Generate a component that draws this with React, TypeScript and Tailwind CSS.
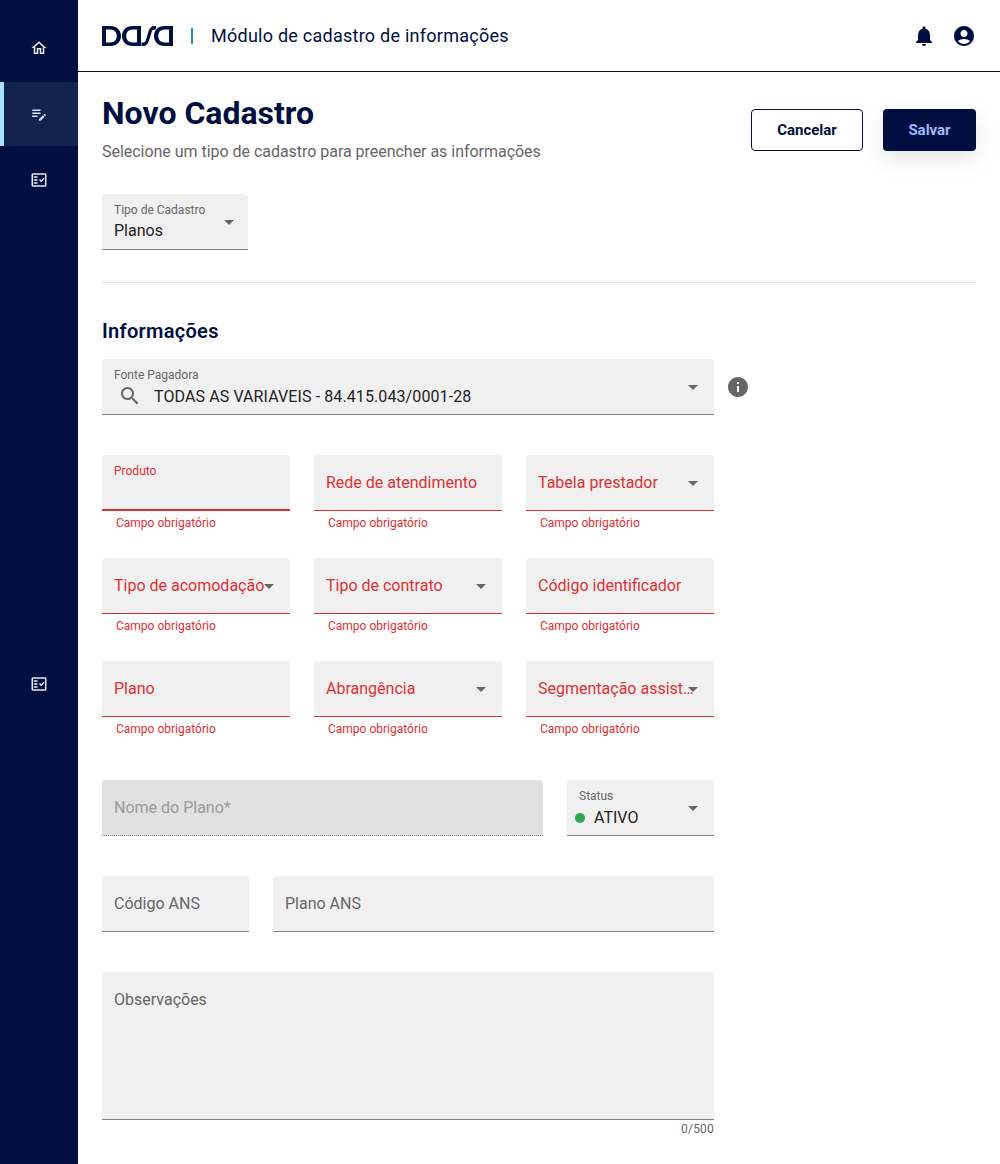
import React from 'react';

const FONT = "font-['Roboto',sans-serif]";
const RED = 'text-[#de3033]';

const Icon = ({ d, className }: { d: string; className: string }) => (
  <svg viewBox="0 0 24 24" fill="currentColor" className={className}>
    <path d={d} />
  </svg>
);

const HOME = 'M12 5.69l5 4.5V18h-2v-6H9v6H7v-7.81l5-4.5M12 3L2 12h3v8h6v-6h2v6h6v-8h3L12 3z';
const NOTE = 'M3 10h11v2H3zm0-2h11V6H3zm0 8h7v-2H3zm15.01-3.13l.71-.71c.39-.39 1.02-.39 1.41 0l.71.71c.39.39.39 1.02 0 1.41l-.71.71-2.12-2.12zm-.71.71l-5.3 5.3V21h2.12l5.3-5.3-2.12-2.12z';
const CHECK = 'M20 3H4c-1.1 0-2 .9-2 2v14c0 1.1.9 2 2 2h16c1.1 0 2-.9 2-2V5c0-1.1-.9-2-2-2zm0 16H4V5h16v14zM19.41 10.42L17.99 9l-3.17 3.17-1.41-1.42L12 12.16 14.82 15zM5 7h5v2H5zM5 11h5v2H5zM5 15h5v2H5z';
const BELL = 'M12 22c1.1 0 2-.9 2-2h-4c0 1.1.9 2 2 2zm6-6v-5c0-3.07-1.63-5.64-4.5-6.32V4c0-.83-.67-1.5-1.5-1.5s-1.5.67-1.5 1.5v.68C7.64 5.36 6 7.92 6 11v5l-2 2v1h16v-1l-2-2z';
const USER = 'M12 2C6.48 2 2 6.48 2 12s4.48 10 10 10 10-4.48 10-10S17.52 2 12 2zm0 4c1.93 0 3.5 1.57 3.5 3.5S13.93 13 12 13s-3.5-1.57-3.5-3.5S10.07 6 12 6zm0 14c-2.03 0-4.43-.82-6.14-2.88C7.55 15.8 9.68 15 12 15s4.45.8 6.14 2.12C16.43 19.18 14.03 20 12 20z';
const INFO = 'M12 2C6.48 2 2 6.48 2 12s4.48 10 10 10 10-4.48 10-10S17.52 2 12 2zm1 15h-2v-6h2v6zm0-8h-2V7h2v2z';
const SEARCH = 'M15.5 14h-.79l-.28-.27C15.41 12.59 16 11.11 16 9.5 16 5.91 13.09 3 9.5 3S3 5.91 3 9.5 5.91 16 9.5 16c1.61 0 3.09-.59 4.23-1.57l.27.28v.79l5 4.99L20.49 19l-4.99-5zm-6 0C7.01 14 5 11.99 5 9.5S7.01 5 9.5 5 14 7.01 14 9.5 11.99 14 9.5 14z';

const Caret = ({ className = 'right-[16px]' }: { className?: string }) => (
  <span className={`absolute top-1/2 -mt-[2px] h-0 w-0 border-x-[5px] border-t-[5px] border-x-transparent border-t-[#666] ${className}`} />
);

const Logo = () => (
  <svg viewBox="0 0 71 20" fill="#000f40" className="h-[20px] w-[71px]">
    <path fillRule="evenodd" d="M0 0h8.5c6 0 10.5 4 10.5 10s-4.500 10-10.500 10H0zM4 3.500v13h4.500c3.700 0 6.300-2.800 6.300-6.500S12.200 3.500 8.500 3.500z" />
    <path fillRule="evenodd" d="M39 0v20H30.500C24.500 20 20 16 20 10S24.500 0 30.500 0zM35 3.500h-4.500c-3.700 0-6.300 2.800-6.300 6.500s2.600 6.500 6.300 6.500H35z" />
    <path d="M39.500 20v-3.500h1.500c1.500 0 2.300-.7 2.800-2.300l2.600-8.400C47.400 2 49.500 0 52.500 0h1.500v3.500h-1.500c-1.500 0-2.300.7-2.800 2.300l-2.600 8.400C46.100 18 44 20 41 20z" />
    <path fillRule="evenodd" d="M71 0v20H62.500C56.500 20 52 16 52 10S56.500 0 62.500 0zM67 3.500h-4.500c-3.700 0-6.300 2.800-6.300 6.500s2.600 6.500 6.300 6.500H67z" />
  </svg>
);

interface FieldProps {
  label: string;
  small?: boolean;
  caret?: boolean;
  thick?: boolean;
}

const ErrorField = ({ label, small, caret, thick }: FieldProps) => (
  <div>
    <div className={`relative h-[56px] rounded-t-[4px] bg-[#f0f0f0] border-b-[#de3033] ${thick ? 'border-b-2' : 'border-b'}`}>
      {small ? (
        <span className={`absolute left-[12px] top-[8px] text-[12px] leading-[16px] ${RED}`}>{label}</span>
      ) : (
        <span className={`absolute left-[12px] top-[16px] text-[16px] leading-[24px] ${RED} whitespace-nowrap overflow-hidden text-ellipsis ${caret ? 'max-w-[158px]' : ''}`}>{label}</span>
      )}
      {caret && <Caret />}
    </div>
    <p className={`mt-[4px] pl-[14px] text-[12px] leading-[16px] ${RED}`}>Campo obrigatório</p>
  </div>
);

const PlainField = ({ label, className }: { label: string; className: string }) => (
  <div className={`h-[56px] rounded-t-[4px] bg-[#f0f0f0] border-b border-b-[#808080] px-[12px] pt-[16px] text-[16px] leading-[24px] text-[#666] ${className}`}>{label}</div>
);

const NavItem = ({ d, active, className }: { d: string; active?: boolean; className?: string }) => (
  <div className={`flex h-[64px] items-center justify-center ${active ? 'bg-[#12234f] border-l-4 border-l-[#a8e0ff] pr-[4px]' : ''} ${className ?? ''}`}>
    <Icon d={d} className={`h-[18px] w-[18px] ${active ? 'text-[#cfe9fb]' : 'text-[#e4e6ec]'}`} />
  </div>
);

export default function App() {
  return (
    <div className={`flex min-h-[1164px] bg-white ${FONT}`}>
      <aside className="w-[78px] shrink-0 bg-[#000f40] pt-[16px]">
        <NavItem d={HOME} />
        <NavItem d={NOTE} active className="mt-[2px]" />
        <NavItem d={CHECK} className="mt-[2px]" />
        <NavItem d={CHECK} className="mt-[440px]" />
      </aside>

      <div className="flex-1 min-w-0">
        <header className="flex h-[72px] items-center border-b border-b-[#000f40] pl-[24px] pr-[24px]">
          <Logo />
          <span className="ml-[18px] h-[16px] w-[2px] bg-[#2a86c8]" />
          <span className="ml-[18px] text-[18px] tracking-[0.25px] text-[#000f40]">Módulo de cadastro de informações</span>
          <div className="ml-auto flex items-center gap-[16px]">
            <Icon d={BELL} className="h-[24px] w-[24px] text-[#000f40]" />
            <Icon d={USER} className="h-[24px] w-[24px] text-[#000f40]" />
          </div>
        </header>

        <main className="px-[24px]">
          <div className="flex items-start justify-between pt-[21px]">
            <div>
              <h1 className="text-[32px] leading-[40px] font-bold text-[#000f40]">Novo Cadastro</h1>
              <p className="mt-[7px] text-[16px] leading-[24px] tracking-[-0.03px] text-[#666]">Selecione um tipo de cadastro para preencher as informações</p>
            </div>
            <div className="mt-[16px] flex gap-[20px]">
              <button className="h-[42px] w-[112px] rounded-[4px] border border-[#000f40] bg-white text-[15px] font-bold text-[#000f40]">Cancelar</button>
              <button className="h-[42px] w-[93px] rounded-[4px] bg-[#000f40] text-[15px] font-bold text-[#a3b8ff] shadow-[0_8px_24px_rgba(0,0,0,0.1)]">Salvar</button>
            </div>
          </div>

          <div className="relative mt-[30px] h-[56px] w-[146px] rounded-t-[4px] bg-[#f0f0f0] border-b border-b-[#808080]">
            <span className="absolute left-[12px] top-[8px] text-[12px] leading-[16px] text-[#666]">Tipo de Cadastro</span>
            <span className="absolute left-[12px] top-[25px] text-[16px] leading-[24px] text-[#222]">Planos</span>
            <Caret className="right-[14px]" />
          </div>

          <hr className="mt-[32px] border-t border-t-[#e0e0e0]" />

          <h2 className="mt-[34px] text-[20px] leading-[28px] tracking-[0.3px] font-semibold text-[#000f40]">Informações</h2>

          <div className="mt-[14px] flex items-center gap-[12px]">
            <div className="relative h-[56px] w-[612px] rounded-t-[4px] bg-[#f0f0f0] border-b border-b-[#808080]">
              <span className="absolute left-[12px] top-[8px] text-[12px] leading-[16px] text-[#666]">Fonte Pagadora</span>
              <Icon d={SEARCH} className="absolute left-[16px] top-[25px] h-[24px] w-[24px] text-[#666]" />
              <span className="absolute left-[52px] top-[26px] text-[16px] leading-[24px] tracking-[0.1px] text-[#222]">TODAS AS VARIAVEIS - 84.415.043/0001-28</span>
              <Caret />
            </div>
            <Icon d={INFO} className="h-[24px] w-[24px] text-[#666]" />
          </div>

          <div className="mt-[40px] grid w-[612px] grid-cols-3 gap-x-[24px] gap-y-[27px]">
            <ErrorField label="Produto" small thick />
            <ErrorField label="Rede de atendimento" />
            <ErrorField label="Tabela prestador" caret />
            <ErrorField label="Tipo de acomodação" caret />
            <ErrorField label="Tipo de contrato" caret />
            <ErrorField label="Código identificador" />
            <ErrorField label="Plano" />
            <ErrorField label="Abrangência" caret />
            <ErrorField label="Segmentação assistencial" caret />
          </div>

          <div className="mt-[43px] flex w-[612px] gap-[24px]">
            <div className="h-[56px] w-[441px] rounded-t-[4px] bg-[#e0e0e0] border-b border-dotted border-b-[#808080] px-[12px] pt-[16px] text-[16px] leading-[24px] text-[#999]">Nome do Plano*</div>
            <div className="relative h-[56px] w-[147px] rounded-t-[4px] bg-[#f0f0f0] border-b border-b-[#808080]">
              <span className="absolute left-[12px] top-[8px] text-[12px] leading-[16px] text-[#666]">Status</span>
              <span className="absolute left-[8px] top-[33px] h-[10px] w-[10px] rounded-full bg-[#2fa84f]" />
              <span className="absolute left-[27px] top-[26px] text-[16px] leading-[24px] text-[#222]">ATIVO</span>
              <Caret />
            </div>
          </div>

          <div className="mt-[40px] flex w-[612px] gap-[24px]">
            <PlainField label="Código ANS" className="w-[147px]" />
            <PlainField label="Plano ANS" className="flex-1" />
          </div>

          <div className="mt-[40px] h-[148px] w-[612px] rounded-t-[4px] bg-[#f0f0f0] border-b border-b-[#808080] px-[12px] pt-[16px] text-[16px] leading-[24px] text-[#666]">Observações</div>
          <p className="w-[612px] text-right text-[12px] leading-[18px] tracking-[0.2px] text-[#666]">0/500</p>
        </main>
      </div>
    </div>
  );
}
